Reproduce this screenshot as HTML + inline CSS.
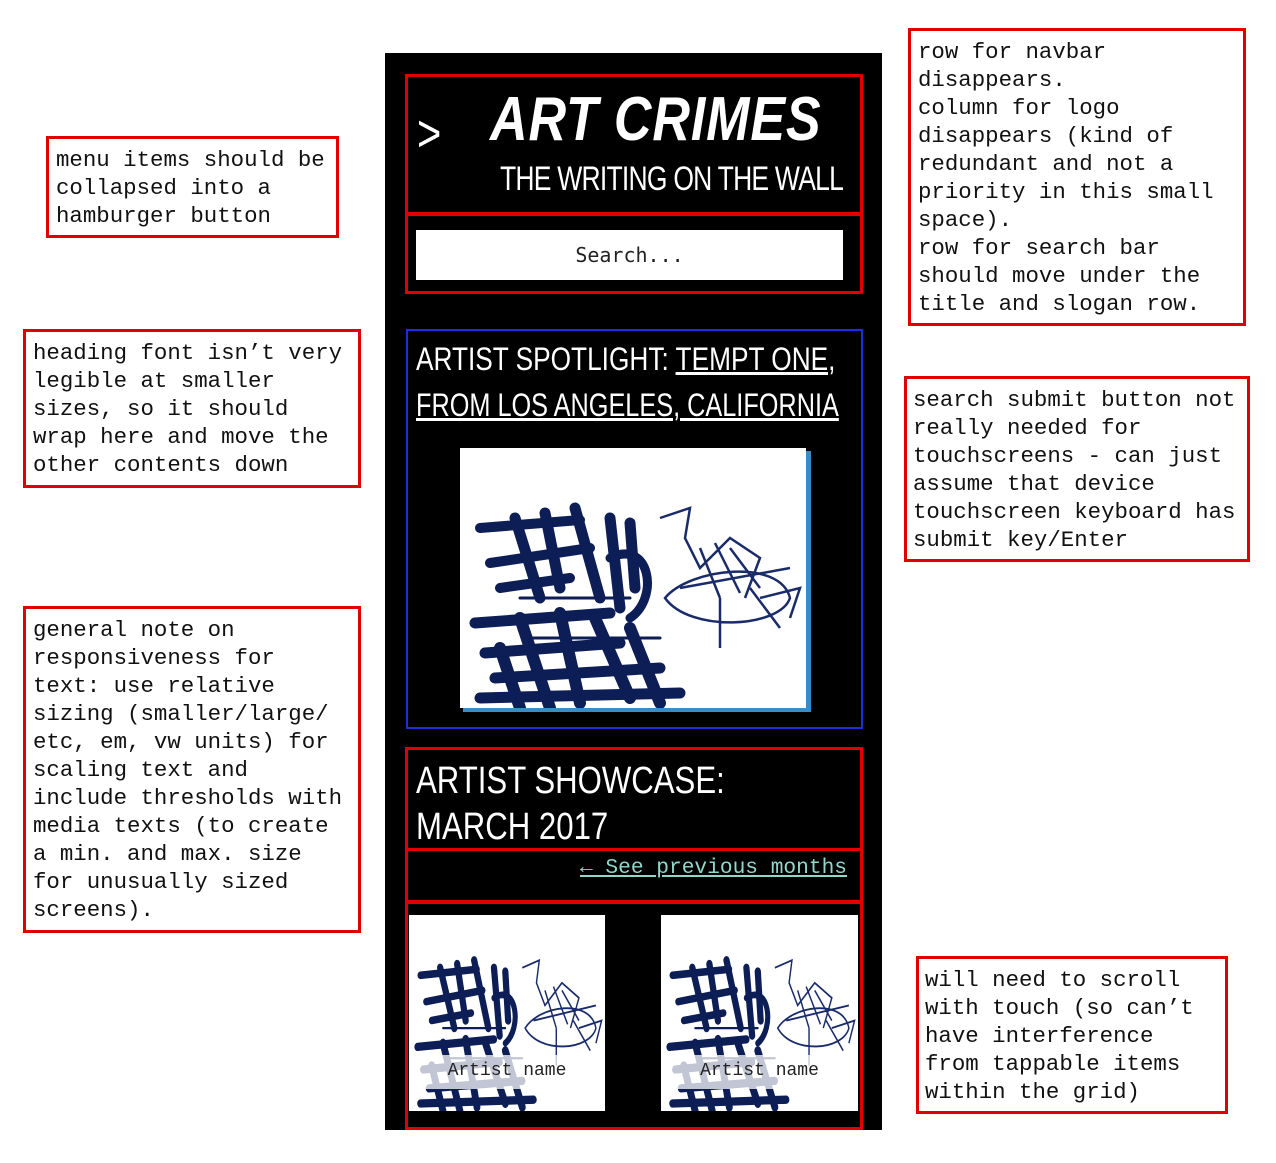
<!DOCTYPE html>
<html><head><meta charset="utf-8">
<style>
*{margin:0;padding:0;box-sizing:border-box}
body{width:1276px;height:1163px;background:#fff;position:relative;overflow:hidden;font-family:"Liberation Mono",monospace}
.note{position:absolute;border:3px solid #e00000;font-size:22.4px;line-height:28px;color:#111;white-space:pre;padding-left:7px}
.ab{position:absolute}
.red{position:absolute;border:3px solid #e00000}
.hand{font-family:"Liberation Sans Narrow","Liberation Sans",sans-serif;color:#fff;position:absolute;white-space:nowrap}
</style></head><body>

<svg width="0" height="0" style="position:absolute">
<defs>
<symbol id="g" viewBox="0 0 346 260">
<g stroke="#0d1d55" stroke-linecap="round" fill="none">
<path d="M20 80 L120 72 M30 115 L130 100 M40 140 L110 130" stroke-width="10"/>
<path d="M55 70 L80 150 M85 65 L100 140 M115 60 L140 150 M150 70 L160 160 M170 75 L175 140" stroke-width="11"/>
<path d="M150 110 C190 90 200 150 170 170" stroke-width="9"/>
<path d="M15 175 L150 165 M25 205 L160 195 M35 230 L200 220 M20 250 L220 245" stroke-width="11"/>
<path d="M60 170 L90 260 M100 165 L120 255 M135 170 L170 250 M170 180 L200 255 M40 200 L60 260" stroke-width="12"/>
<path d="M60 150 L170 150 M70 190 L200 190" stroke-width="3"/>
</g>
<g stroke="#1a2b6a" stroke-width="2.5" fill="none">
<path d="M200 70 L230 60 L225 90 L240 120 L270 90 L300 110 L285 150"/>
<path d="M205 150 C230 120 320 110 330 150 C320 180 230 185 205 150Z"/>
<path d="M240 100 L260 150 M255 95 L280 145 M270 100 L300 140 M260 150 L260 200 M290 140 L320 180"/>
<path d="M300 150 L340 140 L330 170 M220 140 L330 120"/>
</g>
</symbol>
</defs></svg>

<div class="note" style="left:46px;top:136px;width:293px;height:102px;padding-top:7px">menu items should be
collapsed into a
hamburger button</div>
<div class="note" style="left:23px;top:329px;width:338px;height:159px;padding-top:7px">heading font isn’t very
legible at smaller
sizes, so it should
wrap here and move the
other contents down</div>
<div class="note" style="left:23px;top:606px;width:338px;height:327px;padding-top:7px">general note on
responsiveness for
text: use relative
sizing (smaller/large/
etc, em, vw units) for
scaling text and
include thresholds with
media texts (to create
a min. and max. size
for unusually sized
screens).</div>
<div class="note" style="left:908px;top:28px;width:338px;height:298px;padding-top:7px">row for navbar
disappears.
column for logo
disappears (kind of
redundant and not a
priority in this small
space).
row for search bar
should move under the
title and slogan row.</div>
<div class="note" style="left:904px;top:376px;width:346px;height:186px;padding-top:7px;padding-left:6px">search submit button not
really needed for
touchscreens - can just
assume that device
touchscreen keyboard has
submit key/Enter</div>
<div class="note" style="left:916px;top:956px;width:312px;height:158px;padding-top:7px;padding-left:6px">will need to scroll
with touch (so can’t
have interference
from tappable items
within the grid)</div>

<!-- phone -->
<div class="ab" style="left:385px;top:53px;width:497px;height:1077px;background:#000"></div>

<div class="red" style="left:405px;top:74px;width:458px;height:141px"></div>
<div class="hand" style="left:417px;top:104px;font-size:52px;transform:scaleX(0.8);transform-origin:left">&gt;</div>
<div class="hand" style="left:490px;top:84px;font-size:62px;font-weight:bold;font-style:italic;letter-spacing:1px;transform:scaleX(0.84);transform-origin:left">ART CRIMES</div>
<div class="hand" style="left:500px;top:160px;font-size:34px;transform:scaleX(0.78);transform-origin:left;letter-spacing:-1px">THE WRITING ON THE WALL</div>

<div class="red" style="left:405px;top:213px;width:458px;height:81px"></div>
<div class="ab" style="left:416px;top:230px;width:427px;height:50px;background:#fff;color:#222;font-size:20px;line-height:50px;text-align:center;font-family:'DejaVu Sans Mono',monospace">Search...</div>

<div class="ab" style="left:406px;top:329px;width:457px;height:400px;border:2.5px solid #1a2fe0"></div>
<div class="hand" style="left:416px;top:336px;font-size:32px;line-height:46px;transform:scaleX(0.82);transform-origin:left">ARTIST SPOTLIGHT: <u>TEMPT ONE,</u></div>
<div class="hand" style="left:416px;top:382px;font-size:32px;line-height:46px;transform:scaleX(0.79);transform-origin:left"><u>FROM LOS ANGELES, CALIFORNIA</u></div>
<div class="ab" style="left:463px;top:451px;width:348px;height:261px;background:#3a8cc4"></div>
<div class="ab" style="left:460px;top:448px;width:346px;height:260px;background:#fff"><svg width="346" height="260" style="position:absolute;left:0;top:0"><use href="#g" width="346" height="260"/></svg></div>

<div class="red" style="left:405px;top:747px;width:458px;height:104px"></div>
<div class="hand" style="left:416px;top:758px;font-size:38px;line-height:46px;transform:scaleX(0.82);transform-origin:left">ARTIST SHOWCASE:<br>MARCH 2017</div>
<div class="red" style="left:405px;top:848px;width:458px;height:55px"></div>
<div class="ab" style="left:580px;top:855px;color:#8fd8cc;font-size:21.2px;line-height:26px;text-decoration:underline;white-space:nowrap">← See previous months</div>

<div class="red" style="left:405px;top:901px;width:458px;height:229px"></div>
<div class="ab" style="left:409px;top:915px;width:196px;height:196px;background:#fff;overflow:hidden">
<svg width="196" height="196" viewBox="0 0 346 260" preserveAspectRatio="none"><use href="#g" width="346" height="260"/></svg>
<div class="ab" style="left:0;top:140px;width:196px;height:34px;background:rgba(255,255,255,.75);color:#222;font-size:18px;line-height:32px;text-align:center">Artist name</div></div>
<div class="ab" style="left:661px;top:915px;width:197px;height:196px;background:#fff;overflow:hidden">
<svg width="197" height="196" viewBox="0 0 346 260" preserveAspectRatio="none"><use href="#g" width="346" height="260"/></svg>
<div class="ab" style="left:0;top:140px;width:197px;height:34px;background:rgba(255,255,255,.75);color:#222;font-size:18px;line-height:32px;text-align:center">Artist name</div></div>

</body></html>
